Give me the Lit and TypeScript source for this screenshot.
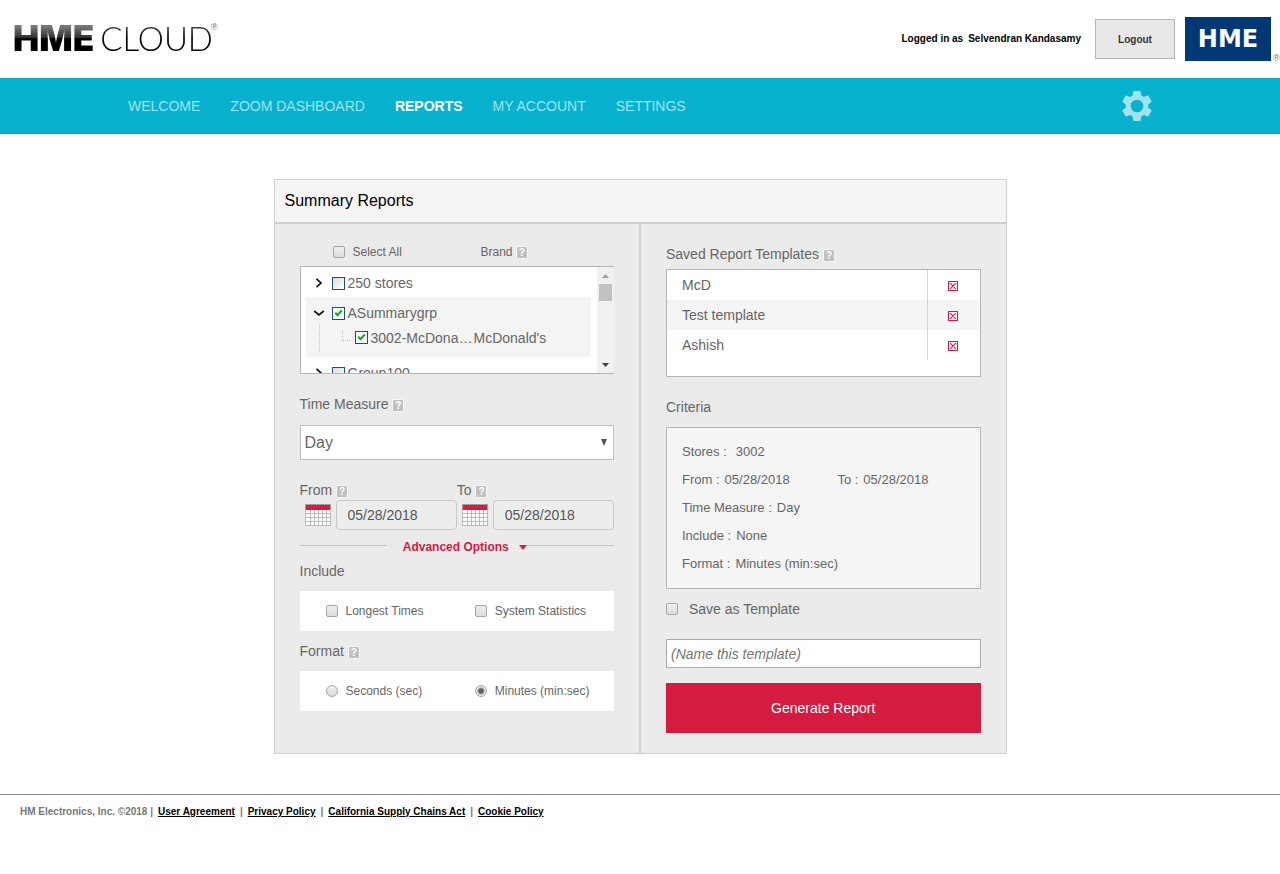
import { LitElement, html, css, svg } from "lit";
import { customElement, property, state } from "lit/decorators.js";

const controls = css`
  * {
    box-sizing: border-box;
  }
  button,
  input,
  select {
    font-family: inherit;
    margin: 0;
  }
  button {
    border: 0;
    padding: 0;
    background: none;
    cursor: pointer;
  }
  .check,
  .radio {
    appearance: none;
    flex: none;
    width: 12px;
    height: 12px;
    border: 1px solid #a6a6a6;
    border-radius: 2px;
    background: linear-gradient(#eeeeee, #dcdcdc);
  }
  .radio {
    border-radius: 50%;
  }
  .radio:checked {
    background: radial-gradient(circle, #5c5c5c 0 2px, #e4e4e4 4px);
  }
`;

@customElement("help-tip")
export class HelpTip extends LitElement {
  static styles = css`
    :host {
      display: inline-block;
      vertical-align: middle;
    }
    .tip {
      display: block;
      box-sizing: border-box;
      width: 12px;
      height: 13px;
      border: 1px solid #f6f6f6;
      border-radius: 2px;
      background: #c1c1c1;
      color: #ffffff;
      font: bold 10px/11px "Liberation Sans", Arial, sans-serif;
      text-align: center;
    }
  `;
  render() {
    return html`<span class="tip">?</span>`;
  }
}

interface Group {
  name: string;
  open?: boolean;
  checked?: boolean;
  stores?: { name: string; brand: string }[];
}

@customElement("store-tree")
export class StoreTree extends LitElement {
  static styles = [
    controls,
    css`
      :host {
        display: block;
      }
      .box {
        display: flex;
        height: 108px;
        overflow: hidden;
        border: 1px solid #b5b5b5;
        border-right: 0;
        background: #ffffff;
      }
      .list {
        flex: 1;
        min-width: 0;
        margin: 0;
        padding: 0 6px 0 5px;
        list-style: none;
      }
      .group.open {
        height: 60px;
        background: #f4f4f4;
      }
      .row {
        display: flex;
        align-items: center;
        height: 30px;
        padding: 2px 0 0 9px;
      }
      .toggle {
        display: flex;
        width: 8px;
        height: 10px;
        margin-right: 9px;
      }
      .toggle svg {
        width: 8px;
        height: 10px;
        overflow: visible;
      }
      .item {
        display: flex;
        align-items: center;
        gap: 3px;
        white-space: nowrap;
      }
      .tick {
        appearance: none;
        flex: none;
        width: 13px;
        height: 13px;
        border: 1px solid #1c5180;
        background: linear-gradient(135deg, #dcdcd7, #ffffff);
      }
      .tick:checked {
        background:
          url("data:image/svg+xml,%3Csvg xmlns='http://www.w3.org/2000/svg' viewBox='0 0 11 11'%3E%3Cpath d='M2.3 4.6l2.2 2.6 4.2-4.7' fill='none' stroke='%2321a121' stroke-width='2'/%3E%3C/svg%3E"),
          #f6f6f4;
      }
      .branch {
        display: flex;
        height: 29px;
        margin-left: 13px;
        border-left: 1px dotted #c4c4c4;
        margin-top: -4px;
      }
      .elbow {
        width: 8px;
        height: 10px;
        margin: 8px 5px 0 22px;
        border: dotted #c4c4c4;
        border-width: 0 0 1px 1px;
      }
      .store {
        width: 103px;
      }
      .scroll {
        display: flex;
        flex-direction: column;
        align-items: center;
        width: 17px;
        background: #f1f1f1;
      }
      .scroll svg {
        width: 7px;
        height: 4px;
        margin: 7px 0 6px;
      }
      .thumb {
        width: 13px;
        height: 17px;
        margin-bottom: auto;
        background: #c1c1c1;
      }
    `,
  ];

  @property({ attribute: false }) groups: Group[] = [];

  private chevron(open?: boolean) {
    return html`<svg viewBox="0 0 8 10">
      ${open
        ? svg`<path d="M-.8 3l4.8 4L8.800 3" fill="none" stroke="#111" stroke-width="1.700"/>`
        : svg`<path d="M1.500 .8L6 5 1.500 9.200" fill="none" stroke="#111" stroke-width="1.700"/>`}
    </svg>`;
  }

  render() {
    return html`<div class="box">
      <ul class="list">
        ${this.groups.map(
          (g) => html`<li class="group ${g.open ? "open" : ""}">
            <div class="row">
              <button class="toggle" aria-label="Expand ${g.name}">
                ${this.chevron(g.open)}
              </button>
              <label class="item"
                ><input class="tick" type="checkbox" .checked=${!!g.checked} />${g.name}</label
              >
            </div>
            ${g.stores?.map(
              (s) => html`<div class="branch">
                <span class="elbow"></span>
                <label class="item"
                  ><input class="tick" type="checkbox" .checked=${!!g.checked} /><span
                    class="store"
                    >${s.name}</span
                  ></label
                >
                <span class="item">${s.brand}</span>
              </div>`
            )}
          </li>`
        )}
      </ul>
      <div class="scroll">
        <svg viewBox="0 0 7 4"><path d="M0 4L3.500 0 7 4z" fill="#a3a3a3" /></svg>
        <span class="thumb"></span>
        <svg viewBox="0 0 7 4"><path d="M0 0h7L3.500 4z" fill="#404040" /></svg>
      </div>
    </div>`;
  }
}

@customElement("app-root")
export class AppRoot extends LitElement {
  static styles = [
    controls,
    css`
      :host {
        display: block;
        color: #666666;
        background: #ffffff;
        font: 14px/20px "Liberation Sans", Arial, sans-serif;
      }
      .top {
        display: flex;
        align-items: center;
        height: 78px;
        padding-left: 13px;
      }
      .brand {
        display: flex;
        align-items: flex-start;
        margin-right: auto;
        padding-bottom: 3px;
        line-height: 38px;
      }
      .heavy,
      .thin {
        background: linear-gradient(#777777 20%, #333333 48%, #000000 52%);
        background-clip: text;
        -webkit-background-clip: text;
        color: transparent;
      }
      .heavy {
        font-family: Inter, sans-serif;
        font-weight: 900;
        font-size: 35px;
        margin-right: 6px;
      }
      .thin {
        background-image: linear-gradient(#444444 20%, #000000 50%);
        font-family: Lato, sans-serif;
        font-weight: 300;
        font-size: 33px;
      }
      .reg {
        margin-left: -2px;
        color: #777777;
        font-size: 9px;
        line-height: 16px;
      }
      .user {
        display: flex;
        gap: 5px;
        color: #000000;
        font-weight: bold;
        font-size: 10px;
      }
      .logout {
        width: 80px;
        height: 40px;
        margin: 0 10px 0 14px;
        border: 1px solid #b5b5b5;
        background: #e8e8e8;
        color: #333333;
        font-weight: bold;
        font-size: 10px;
      }
      .badge {
        width: 86px;
        height: 44px;
        background: #003876;
        color: #ffffff;
        font: bold 24px/44px "DejaVu Sans", sans-serif;
        text-align: center;
      }
      .badge-reg {
        align-self: flex-end;
        width: 9px;
        padding-left: 2px;
        color: #4a78a8;
        font-size: 9px;
        line-height: 12px;
        margin-bottom: 14px;
      }
      .nav {
        display: flex;
        align-items: center;
        gap: 30px;
        height: 56px;
        padding: 0 10%;
        background: #08b1ce;
      }
      .link {
        color: #a0e3ee;
        text-decoration: none;
      }
      .link.current {
        color: #ffffff;
        font-weight: bold;
      }
      .gear {
        width: 30px;
        height: 30px;
        margin-left: auto;
      }
      .gear svg {
        display: block;
      }
      .panel {
        width: 733px;
        max-width: 100%;
        margin: 45px auto 40px;
        border: 1px solid #d3cfd1;
      }
      .title {
        margin: 0;
        padding: 11px 10px;
        border-bottom: 2px solid #d3cfd1;
        background: #f5f5f5;
        color: #000000;
        font-weight: normal;
        font-size: 16px;
      }
      .columns {
        display: grid;
        grid-template-columns: repeat(2, minmax(0, 1fr));
        gap: 2px;
        background: #d3cfd1;
      }
      .left,
      .right {
        padding: 18px 25px 42px;
        background: #ebebeb;
      }
      .right {
        padding: 20px 25px;
      }
      .heading {
        display: block;
        margin: 0;
        font-weight: normal;
        font-size: 14px;
      }
      .tree-head {
        display: flex;
        margin-bottom: 4px;
        padding-left: 33px;
        font-size: 12px;
      }
      .option {
        display: flex;
        align-items: center;
        gap: 8px;
      }
      .tree-head .option {
        width: 148px;
      }
      .tree {
        margin-bottom: 20px;
      }
      .select-wrap {
        display: grid;
        align-items: center;
        margin: 11px 0 20px;
      }
      .select-wrap > * {
        grid-area: 1 / 1;
      }
      .select {
        appearance: none;
        width: 100%;
        height: 35px;
        padding: 0 4px;
        border: 1px solid #bdbdbd;
        border-radius: 0;
        background: #ffffff;
        color: #666666;
        font-size: 16px;
      }
      .drop {
        justify-self: end;
        margin-right: 7px;
        pointer-events: none;
      }
      .dates {
        display: flex;
      }
      .date-col {
        flex: 1;
        min-width: 0;
      }
      .date-row {
        display: flex;
        align-items: center;
        gap: 5px;
        padding-left: 5px;
      }
      .date-row button,
      .date-row svg {
        display: block;
        flex: none;
      }
      .date {
        flex: 1;
        min-width: 0;
        height: 30px;
        padding: 0 11px;
        border: 1px solid #c9c9c9;
        border-radius: 4px;
        background: #ededed;
        color: #555555;
        font-size: 14px;
      }
      .advanced {
        display: flex;
        align-items: center;
        margin: 7px 0 4px;
      }
      .rule {
        flex: 1;
        height: 1px;
        margin-bottom: 3px;
        background: #c4c4c4;
      }
      .advanced-button {
        display: flex;
        align-items: center;
        gap: 10px;
        margin-left: 16px;
        color: #d51b3f;
        font-weight: bold;
        font-size: 12px;
        line-height: 20px;
      }
      .choices {
        display: grid;
        grid-template-columns: 15fr 14fr;
        height: 40px;
        margin: 10px 0;
        padding-left: 26px;
        background: #ffffff;
        font-size: 12px;
      }
      .choices:last-child {
        margin-bottom: 0;
      }
      .saved {
        height: 108px;
        margin: 5px 0 20px;
        padding-right: 1px;
        border: 1px solid #b5b5b5;
        background: #ffffff;
      }
      .table {
        width: 100%;
        border-collapse: collapse;
      }
      .table tr:nth-child(even) {
        background: #f5f5f5;
      }
      .name {
        height: 30px;
        padding: 0 15px;
      }
      .remove {
        width: 51px;
        padding: 2px 0 0;
        border-left: 1px solid #e9c9cd;
        text-align: center;
      }
      .remove button,
      .remove svg {
        display: block;
        margin: 0 auto;
      }
      .criteria {
        margin: 10px 0;
        padding: 10px 15px;
        border: 1px solid #b5b5b5;
        background: #f5f5f5;
        font-size: 13px;
        line-height: 28px;
      }
      .criterion {
        display: grid;
        grid-template-columns: 11fr 9fr;
      }
      .pair {
        display: flex;
        gap: 5px;
        white-space: nowrap;
      }
      .pair.wide {
        gap: 9px;
      }
      .save {
        gap: 11px;
      }
      .template {
        display: block;
        width: 100%;
        height: 29px;
        margin: 20px 0 15px;
        padding: 0 4px;
        border: 1px solid #a9a9a9;
        background: #ffffff;
        font-size: 14px;
        font-style: italic;
      }
      .template::placeholder {
        color: #757575;
      }
      .generate {
        display: block;
        width: 100%;
        height: 50px;
        background: #d51b3f;
        color: #ffffff;
        font-size: 14px;
      }
      .footer {
        display: flex;
        gap: 5px;
        padding: 7px 20px;
        border-top: 1px solid #888888;
        color: #777777;
        font-weight: bold;
        font-size: 10px;
      }
      .footer a {
        color: #000000;
      }
    `,
  ];

  @state() private groups: Group[] = [
    { name: "250 stores" },
    {
      name: "ASummarygrp",
      open: true,
      checked: true,
      stores: [{ name: "3002-McDona…", brand: "McDonald's" }],
    },
    { name: "Group100" },
  ];

  private pages = ["WELCOME", "ZOOM DASHBOARD", "REPORTS", "MY ACCOUNT", "SETTINGS"];
  private templates = ["McD", "Test template", "Ashish"];
  private policies = [
    "User Agreement",
    "Privacy Policy",
    "California Supply Chains Act",
    "Cookie Policy",
  ];

  private calendar() {
    return html`<svg width="26" height="22" viewBox="0 0 26 22" shape-rendering="crispEdges">
      <path fill="#fff" d="M0 0h26v22H0z" />
      <path
        d="M.5 6v15.500h25V6M5.500 6v15M9.500 6v15M13.500 6v15M17.500 6v15M21.500 6v15M0 9.500h26M0 13.500h26M0 17.500h26"
        fill="none"
        stroke="#b9b9b9"
      />
      <path fill="#d51b3f" d="M0 0h26v6H0z" />
      <path fill="none" stroke="#a89a9d" d="M0 .5h26M.5 0v6M25.500 0v6" />
    </svg>`;
  }

  private dateField(label: string) {
    const id = label.toLowerCase();
    return html`<div class="date-col">
      <label class="heading" for=${id}>${label} <help-tip></help-tip></label>
      <div class="date-row">
        <button aria-label="Pick ${id} date">${this.calendar()}</button>
        <input class="date" id=${id} value="05/28/2018" />
      </div>
    </div>`;
  }

  private pair(label: string, value: string, wide = false) {
    return html`<span class="pair ${wide ? "wide" : ""}"
      ><span>${label} :</span><span>${value}</span></span
    >`;
  }

  render() {
    return html`
      <header class="top">
        <div class="brand">
          <span class="heavy">HME</span><span class="thin">CLOUD</span><span class="reg">®</span>
        </div>
        <div class="user"><span>Logged in as</span><span>Selvendran Kandasamy</span></div>
        <button class="logout">Logout</button>
        <span class="badge">HME</span><span class="badge-reg">®</span>
      </header>
      <nav class="nav">
        ${this.pages.map(
          (p) => html`<a class="link ${p === "REPORTS" ? "current" : ""}" href="#">${p}</a>`
        )}
        <a class="gear" href="#" aria-label="Preferences">
          <svg width="30" height="30" viewBox="2 2 20 20">
            <path
              fill="#a0e3ee"
              fill-rule="evenodd"
              d="M19.430 12.980c.04-.32.07-.64.07-.98s-.03-.66-.07-.98l2.110-1.650c.19-.15.24-.42.12-.64l-2-3.460c-.12-.22-.39-.3-.61-.22l-2.490 1c-.52-.4-1.080-.73-1.690-.98l-.38-2.650C14.460 2.180 14.250 2 14 2h-4c-.25 0-.46.18-.49.42l-.38 2.650c-.61.25-1.170.59-1.690.98l-2.490-1c-.23-.09-.49 0-.61.22l-2 3.460c-.13.22-.07.49.12.64l2.110 1.650c-.04.32-.07.65-.07.98s.03.66.07.98l-2.110 1.650c-.19.15-.24.42-.12.64l2 3.460c.12.22.39.3.61.22l2.490-1c.52.4 1.080.73 1.690.98l.38 2.650c.03.24.24.42.49.42h4c.25 0 .46-.18.49-.42l.38-2.650c.61-.25 1.170-.59 1.690-.98l2.490 1c.23.09.49 0 .61-.22l2-3.460c.12-.22.07-.49-.12-.64zM12 16.200a4.200 4.200 0 1 1 0-8.400 4.200 4.200 0 0 1 0 8.400z"
            />
          </svg>
        </a>
      </nav>

      <main class="panel">
        <h1 class="title">Summary Reports</h1>
        <div class="columns">
          <section class="left">
            <div class="tree-head">
              <label class="option"><input class="check" type="checkbox" />Select All</label>
              <span>Brand <help-tip></help-tip></span>
            </div>
            <store-tree class="tree" .groups=${this.groups}></store-tree>

            <label class="heading" for="measure">Time Measure <help-tip></help-tip></label>
            <div class="select-wrap">
              <select class="select" id="measure">
                <option>Day</option>
              </select>
              <svg class="drop" width="6" height="7" viewBox="0 0 6 7">
                <path d="M0 0h6L3 7z" fill="#555" />
              </svg>
            </div>

            <div class="dates">${this.dateField("From")}${this.dateField("To")}</div>

            <div class="advanced">
              <span class="rule"></span>
              <button class="advanced-button">
                Advanced Options
                <svg width="8" height="5" viewBox="0 0 8 5"><path d="M0 0h8L4 5z" fill="#d51b3f" /></svg>
              </button>
              <span class="rule"></span>
            </div>

            <h2 class="heading">Include</h2>
            <div class="choices">
              <label class="option"><input class="check" type="checkbox" />Longest Times</label>
              <label class="option"><input class="check" type="checkbox" />System Statistics</label>
            </div>
            <h2 class="heading">Format <help-tip></help-tip></h2>
            <div class="choices">
              <label class="option"
                ><input class="radio" type="radio" name="format" />Seconds (sec)</label
              >
              <label class="option"
                ><input class="radio" type="radio" name="format" checked />Minutes (min:sec)</label
              >
            </div>
          </section>

          <section class="right">
            <h2 class="heading">Saved Report Templates <help-tip></help-tip></h2>
            <div class="saved">
              <table class="table">
                <tbody>
                  ${this.templates.map(
                    (t) => html`<tr>
                      <td class="name">${t}</td>
                      <td class="remove">
                        <button aria-label="Delete ${t}">
                          <svg width="10" height="10" viewBox="0 0 10 10">
                            <path
                              d="M.5.5h9v9h-9zM2.200 2.200l5.600 5.600M7.800 2.200L2.200 7.800"
                              fill="#fff"
                              stroke="#d51b3f"
                              stroke-width="1.200"
                            />
                          </svg>
                        </button>
                      </td>
                    </tr>`
                  )}
                </tbody>
              </table>
            </div>

            <h2 class="heading">Criteria</h2>
            <div class="criteria">
              <div>${this.pair("Stores", "3002", true)}</div>
              <div class="criterion">
                ${this.pair("From", "05/28/2018")}${this.pair("To", "05/28/2018")}
              </div>
              <div>${this.pair("Time Measure", "Day")}</div>
              <div>${this.pair("Include", "None")}</div>
              <div>${this.pair("Format", "Minutes (min:sec)")}</div>
            </div>

            <label class="option save"
              ><input class="check" type="checkbox" />Save as Template</label
            >
            <input
              class="template"
              type="text"
              aria-label="Template name"
              placeholder="(Name this template)"
            />
            <button class="generate">Generate Report</button>
          </section>
        </div>
      </main>

      <footer class="footer">
        <span>HM Electronics, Inc. ©2018 |</span>
        ${this.policies.map(
          (p, i) => html`${i ? html`<span>|</span>` : ""}<a href="#">${p}</a>`
        )}
      </footer>
    `;
  }
}
